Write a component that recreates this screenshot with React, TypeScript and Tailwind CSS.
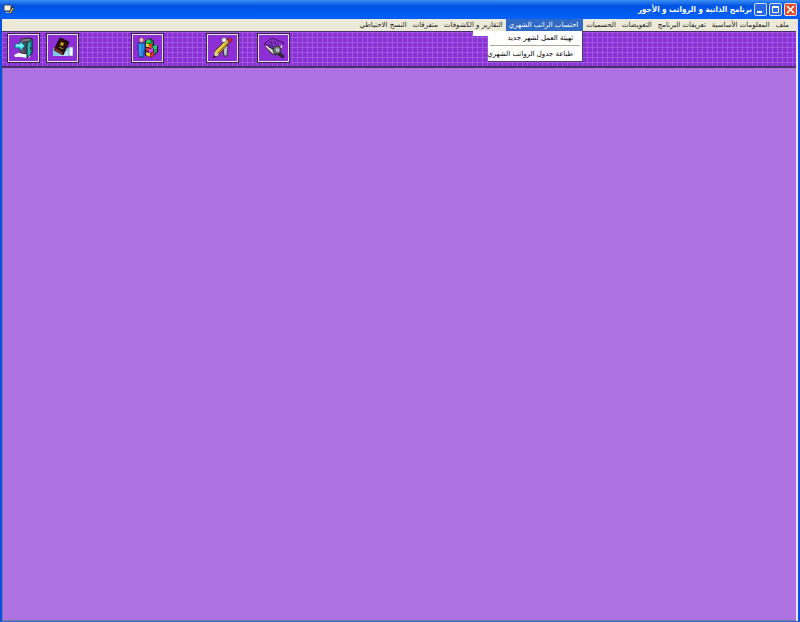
import React from 'react';

const menus = [
  'ملف',
  'المعلومات الأساسية',
  'تعريفات البرنامج',
  'التعويضات',
  'الحسميات',
  'احتساب الراتب الشهري',
  'التقارير و الكشوفات',
  'متفرقات',
  'النسخ الاحتياطي',
];

function ExitIcon() {
  return (
    <svg viewBox="0 0 22 22" className="h-[22px] w-[22px]" aria-hidden="true">
      <path d="M1 18l4-2h6l6 1v3l-3 1-6-1H2z" fill="#f4f2fa" />
      <path d="M8 2l8-1 3 1v15h-4l-7-1z" fill="#77757f" stroke="#2c2638" strokeWidth="1" />
      <path d="M10 4h5v12h-5z" fill="#4b4853" />
      <path d="M14 6l5-4v14l-5 5z" fill="#18908f" stroke="#06383c" strokeWidth="1" />
      <path d="M15 7l2-2v13l-2 1z" fill="#2fb5b0" />
      <path d="M17 10h1v3h-1z" fill="#06383c" />
      <path d="M2 7h5V4l5 5-5 5v-3H2z" fill="#4fe6f2" stroke="#0b6c80" strokeWidth="1" />
      <path d="M3 8h6" stroke="#c6fbff" strokeWidth="1" />
    </svg>
  );
}

function BookIcon() {
  return (
    <svg viewBox="0 0 22 22" className="h-[22px] w-[22px]" aria-hidden="true">
      <path d="M1 11h17v8H1z" fill="#7fc8ea" />
      <path d="M9 14h9v5H8z" fill="#b4e1f5" />
      <path d="M17 10h4v9h-4z" fill="#f6fbff" stroke="#4d6b95" strokeWidth=".6" />
      <path d="M8 1l9 4-6 13-9-5z" fill="#2a0d0c" stroke="#120404" strokeWidth="1" />
      <path d="M2 13l9 5v-2l-8-5z" fill="#7a3b2a" />
      <path d="M9 5l3 1-1 3-3-1z" fill="#c8a51c" />
      <path d="M7 10l4 2" stroke="#b59518" strokeWidth="1" />
    </svg>
  );
}

function PeopleIcon() {
  return (
    <svg viewBox="0 0 22 22" className="h-[22px] w-[22px]" aria-hidden="true">
      <path d="M8 4l5-3 4 3v4l4 1v6l-7 6-6-3z" fill="#1a1430" />
      <path d="M9 4l3-2 2 1v3l-5 1z" fill="#32c848" />
      <path d="M13 3l3 1v4l-3-1z" fill="#1e8c34" />
      <path d="M9 7h3v3H9z" fill="#e8d51c" />
      <path d="M12 7h3v4h-3z" fill="#e13b25" />
      <path d="M15 9l5-1v4l-3 1z" fill="#24c878" />
      <path d="M9 11h3v3H9z" fill="#df2b2b" />
      <path d="M12 12l4-1v4l-4 1z" fill="#e23fe6" />
      <path d="M9 15l4 1v4l-4-2z" fill="#e8d51c" />
      <path d="M13 17l4-2v3l-3 3z" fill="#df2b2b" />
      <path d="M17 13l3-1v3l-3 2z" fill="#21a84a" />
      <path d="M1 6h7v7l-1 1v6H2v-6l-1-1z" fill="#2584e0" stroke="#113a78" strokeWidth="1" />
      <path d="M3 7v12" stroke="#67b6f4" strokeWidth="1" />
      <circle cx="4.5" cy="3" r="2.5" fill="#f1b6b5" stroke="#62304b" strokeWidth=".7" />
    </svg>
  );
}

function PencilIcon() {
  return (
    <svg viewBox="0 0 22 22" className="h-[22px] w-[22px]" aria-hidden="true">
      <path d="M11 6h4l1 4-1 9h-3l-1-7-5 7H4l5-9z" fill="#b9bec9" stroke="#30313f" />
      <path d="M3 14L15 2l3 3L6 18l-4 2z" fill="#e2b52e" stroke="#473014" strokeWidth=".8" />
      <path d="M4 15L15 4" stroke="#fff07a" strokeWidth="1" />
      <path d="M5 17L17 5" stroke="#9a6a16" strokeWidth="1" />
      <path d="M3 14l4 4-5 2z" fill="#e7d5ad" />
      <path d="M1 21l1-3 2 2z" fill="#111" />
      <circle cx="12" cy="3" r="2.5" fill="#f4f5f8" stroke="#4a4a58" strokeWidth=".7" />
      <circle cx="18" cy="3" r="2" fill="#e02c3c" stroke="#5e1220" strokeWidth=".7" />
    </svg>
  );
}

function ScannerIcon() {
  return (
    <svg viewBox="0 0 24 22" className="h-[22px] w-6" aria-hidden="true">
      <path d="M2 7l8-6 12 5-4 6z" fill="#8b31cd" stroke="#3e1765" />
      <path d="M7 8l2-4 1 4 3-4 1 4 3-2" fill="none" stroke="#50217c" />
      <path d="M3 9l9 3 2 6-4-1z" fill="#a9aaa4" stroke="#282832" />
      <path d="M4 9l8 7" stroke="#efe9d6" strokeWidth="1.5" />
      <path d="M17 15l5 4-1 2-6-4z" fill="#2e302d" stroke="#1d2020" />
      <circle cx="15" cy="13" r="4" fill="#727c7c" stroke="#2a3037" />
      <path d="M14 11l3 1v3l-3-1z" fill="#b7c4bf" />
      <path d="M19 11l1-3" stroke="#d8d8d0" strokeWidth="1.5" />
    </svg>
  );
}

function ToolButton({ label, children }: { label: string; children: React.ReactNode }) {
  return (
    <button
      aria-label={label}
      className="flex h-[30px] w-[33px] shrink-0 items-center justify-center border border-[#33283f] bg-[#8e2fd6] shadow-[inset_0_0_0_1px_#e6deee]"
    >
      {children}
    </button>
  );
}

function TitleBar() {
  return (
    <header
      dir="rtl"
      className="flex h-[19px] shrink-0 items-center bg-linear-to-b from-[#3b8df5] via-[#0053e1] via-30% to-[#0061fb] px-[3px]"
    >
      <div className="flex gap-[2px]">
        <button
          aria-label="إغلاق"
          className="flex h-[13px] w-[13px] items-center justify-center rounded-xs border border-[#f5ded8] bg-[#dc4c2b]"
        >
          <svg viewBox="0 0 9 9" className="h-[9px] w-[9px]" aria-hidden="true">
            <path d="M1 1l7 7M8 1L1 8" stroke="#fff" strokeWidth="1.6" />
          </svg>
        </button>
        <button
          aria-label="تكبير"
          className="flex h-[13px] w-[13px] items-center justify-center rounded-xs border border-[#cfdffb] bg-[#2c66e3]"
        >
          <svg viewBox="0 0 9 9" className="h-[9px] w-[9px]" aria-hidden="true">
            <path d="M1.500 1.500h6v6h-6zM1 2.500h7" fill="none" stroke="#fff" />
          </svg>
        </button>
        <button
          aria-label="تصغير"
          className="flex h-[13px] w-[13px] items-center justify-center rounded-xs border border-[#cfdffb] bg-[#2c66e3]"
        >
          <svg viewBox="0 0 9 9" className="h-[9px] w-[9px]" aria-hidden="true">
            <path d="M1 7h5" stroke="#fff" strokeWidth="2" />
          </svg>
        </button>
      </div>
      <h1 className="ps-[2px] font-['DejaVu_Sans_Condensed','DejaVu_Sans',sans-serif] text-[8px] leading-[14px] font-bold whitespace-nowrap text-white">
        برنامج الذاتية و الرواتب و الأجور
      </h1>
      <svg viewBox="0 0 11 11" className="ms-auto h-[11px] w-[11px]" aria-hidden="true">
        <path d="M1 1h7v6H1z" fill="#f3f0e6" stroke="#42444a" />
        <path d="M3 8h3v1H3z" fill="#b8b7ae" />
        <path d="M10 3L7 9" stroke="#302a18" strokeWidth="2.5" />
        <path d="M10 4L7 9" stroke="#f1cc3c" strokeWidth="1.3" />
      </svg>
    </header>
  );
}

function Dropdown() {
  return (
    <div
      role="menu"
      className="absolute start-0 top-full z-10 w-[95px] border-r border-b border-[#4b3d63] bg-white text-black"
    >
      <div className="absolute start-full top-0 h-[5px] w-[15px] bg-white" />
      <button role="menuitem" className="block h-[14px] w-full ps-[9px] text-start whitespace-nowrap">
        تهيئة العمل لشهر جديد
      </button>
      <hr className="mx-[2px] border-[#aca899]" />
      <button role="menuitem" className="block h-[15px] w-full ps-[9px] text-start whitespace-nowrap">
        طباعة جدول الرواتب الشهري
      </button>
    </div>
  );
}

export default function App() {
  return (
    <div className="flex h-screen min-h-40 flex-col bg-[#0a4fdc] font-['DejaVu_Sans',sans-serif] text-[7px] leading-[12px]">
      <TitleBar />
      <div className="me-[2px] ms-[2px] flex min-h-0 flex-1 flex-col border-r-2 border-[#e9e3f3]">
        <nav dir="rtl" className="flex h-3 shrink-0 bg-[#ece9d8] px-1 text-[#1c1c1c]">
          {menus.map((name, i) => (
            <div key={name} className="relative">
              <button
                className={
                  i === 5
                    ? 'block h-3 bg-[#316ac5] ps-[5px] pe-[3px] whitespace-nowrap text-white'
                    : 'block h-3 px-[3px] whitespace-nowrap'
                }
              >
                {name}
              </button>
              {i === 5 && <Dropdown />}
            </div>
          ))}
        </nav>
        <div
          role="toolbar"
          className="flex h-[37px] shrink-0 items-start border-t border-b-2 border-[#4a3068] bg-[#8b2fd6] bg-[linear-gradient(to_right,#a057df_1px,transparent_1px),linear-gradient(to_bottom,#a057df_1px,transparent_1px)] bg-size-[5px_5px] ps-[5px] pt-px"
        >
          <div className="flex gap-[6px]">
            <ToolButton label="خروج"><ExitIcon /></ToolButton>
            <ToolButton label="السجل"><BookIcon /></ToolButton>
          </div>
          <div className="ps-[52px]">
            <ToolButton label="الموظفون"><PeopleIcon /></ToolButton>
          </div>
          <div className="flex gap-[18px] ps-[42px]">
            <ToolButton label="تعديل"><PencilIcon /></ToolButton>
            <ToolButton label="طباعة"><ScannerIcon /></ToolButton>
          </div>
        </div>
        <main className="flex-1 border-b border-l border-[#6f7fa8] bg-[#af72e3]" />
      </div>
      <div className="h-px shrink-0 bg-[#3f63cf]" />
    </div>
  );
}
